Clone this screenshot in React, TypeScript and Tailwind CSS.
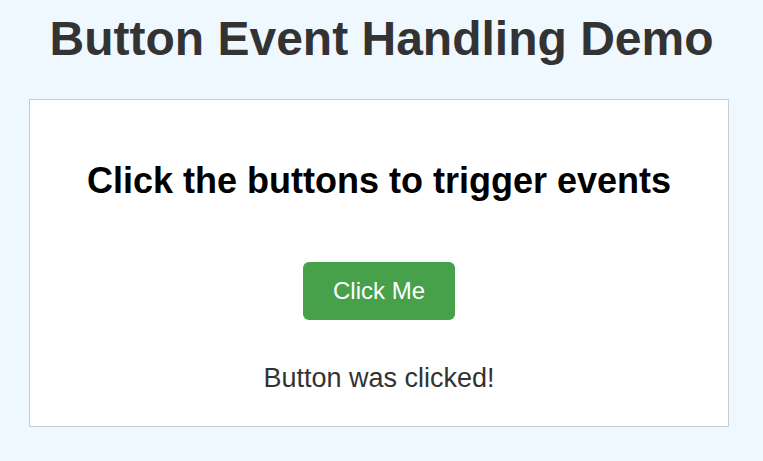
export default function App() {
  return (
    <div
      className="min-h-[461px] bg-[#f0f8ff] pt-[11px] font-['Liberation_Sans',Arial,sans-serif]"
    >
      <h1 className="text-center text-[48px] font-bold leading-[55px] text-[#333333]">
        Button Event Handling Demo
      </h1>

      <div className="ml-[29px] mt-[33px] w-[700px] border border-[#cccccc] bg-white pt-[60px] pb-[32px]">
        <div className="flex flex-col items-center">
          <h2 className="text-[36px] font-bold leading-[41px] text-black">
            Click the buttons to trigger events
          </h2>

          <button
            type="button"
            className="mt-[61px] h-[58px] w-[152px] rounded-[6px] bg-[#46a14a] text-[24px] leading-[28px] text-white"
          >
            Click Me
          </button>

          <p className="mt-[43px] text-[27px] leading-[31px] text-[#333333]">
            Button was clicked!
          </p>
        </div>
      </div>
    </div>
  );
}
